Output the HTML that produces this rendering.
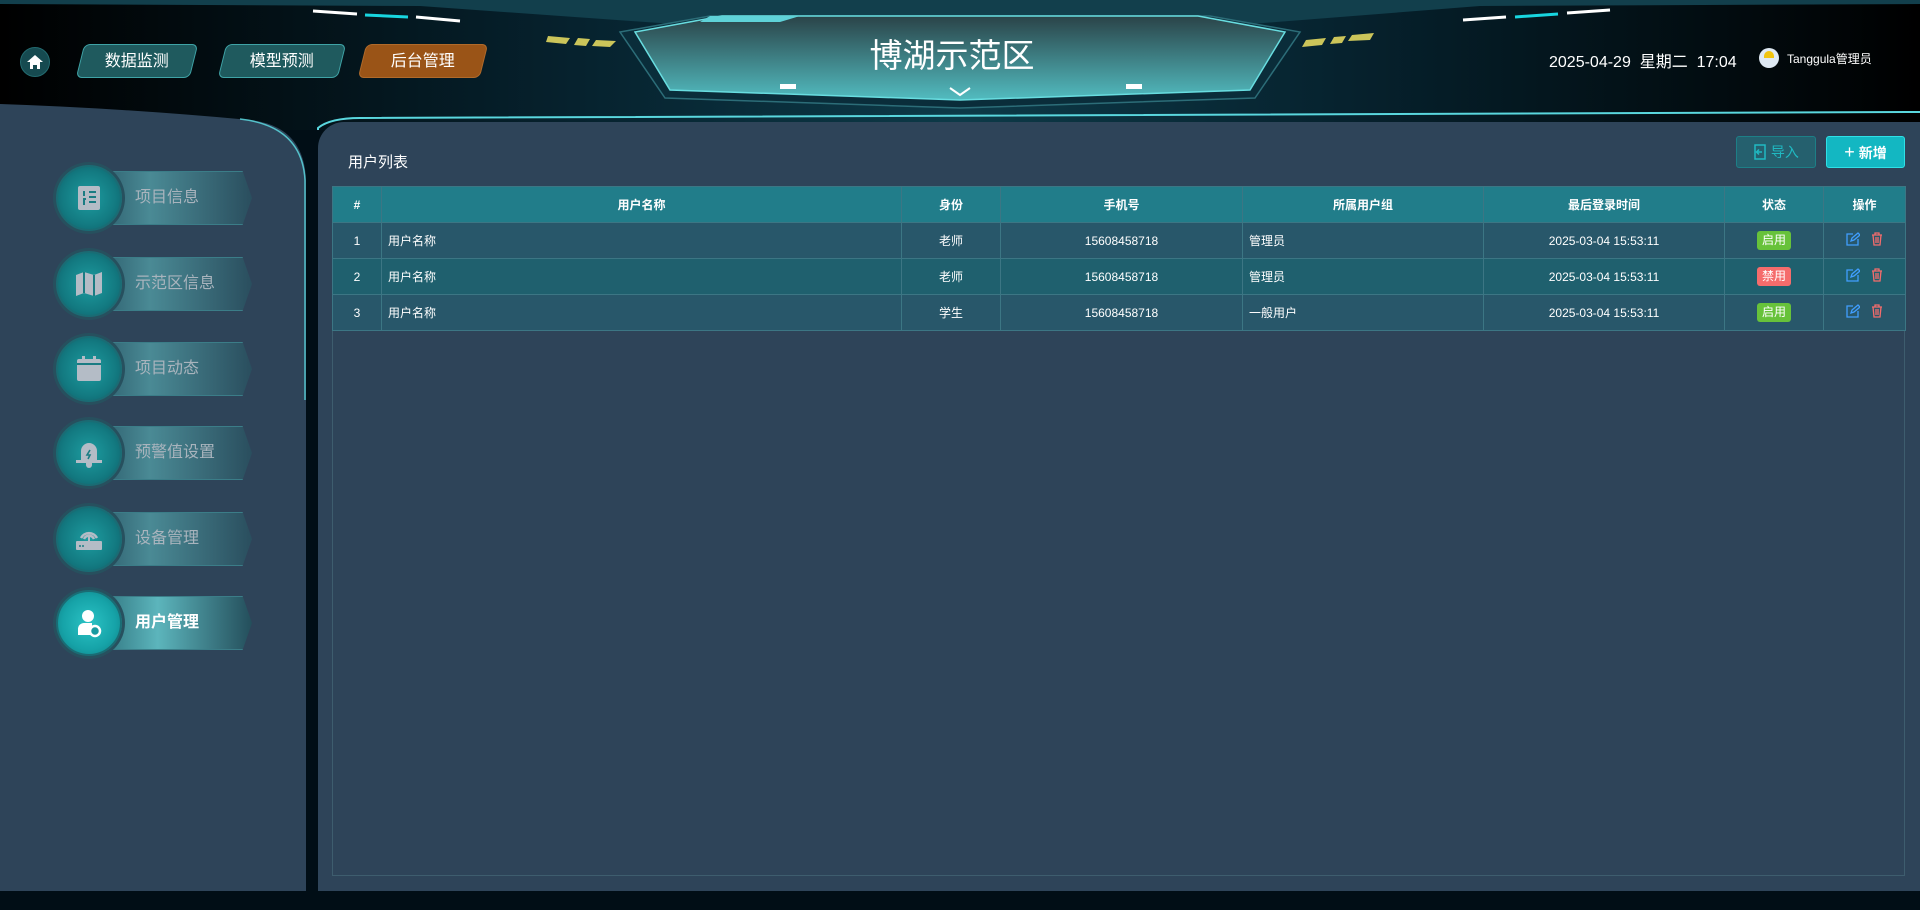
<!DOCTYPE html>
<html><head><meta charset="utf-8">
<style>
*{margin:0;padding:0;box-sizing:border-box}
body{width:1920px;height:910px;overflow:hidden;background:#010e16;font-family:"Liberation Sans","Noto Sans CJK SC",sans-serif;color:#fff;position:relative}
.abs{position:absolute}
.tab{position:absolute;top:44px;height:34px;line-height:34px;text-align:center;font-size:16px;color:#fff;transform:skewX(-14deg);border-radius:6px;border:1px solid #3fa3a6}
.tab span{display:inline-block;transform:skewX(14deg)}
.menu{position:absolute;left:0;width:300px;height:70px}
.menu .bar{position:absolute;left:95px;top:8px;width:157px;height:54px;background:linear-gradient(90deg,#2b5b6a 0%,#4a8a95 35%,#2a4e5e 100%);border-top:1px solid #3b7d88;border-bottom:1px solid #3b7d88;clip-path:polygon(0 0,94% 0,100% 50%,94% 100%,0 100%)}
.menu .circ{position:absolute;left:56px;top:2px;width:66px;height:66px;border-radius:50%;background:radial-gradient(circle,#1d9ca0 0%,#137b82 60%,#0f5c66 100%);border:2px solid #1a6c74;box-shadow:0 0 0 3px #27505e}
.menu .txt{position:absolute;left:135px;top:0;line-height:70px;font-size:16px;color:#a9b4bd}
.menu.act .txt{color:#fff;font-weight:bold}
.menu.act .bar{background:linear-gradient(90deg,#2b6d78 0%,#5cb5bc 40%,#244e5b 100%)}
.menu.act .circ{background:radial-gradient(circle,#2bc3c5 0%,#16a3a8 60%,#0f7a80 100%)}
.menu svg.ic{position:absolute;left:73px;top:19px}
table{border-collapse:collapse;font-size:12px;table-layout:fixed}
td,th{border:1px solid #3c7684;height:36px;text-align:center;color:#fff}
th{background:#217d8a;font-weight:bold}
tr.r1 td{background:#28576a}
tr.r2 td{background:#1f606e}
td.l{text-align:left;padding-left:6px}
.badge{display:inline-block;padding:0 5px;height:19px;line-height:19px;border-radius:3px;font-size:12px;color:#fff}
</style></head><body>
<svg class="abs" style="left:0;top:0" width="1920" height="130">
<defs>
<linearGradient id="hg" x1="0" x2="1"><stop offset="0" stop-color="#000"/><stop offset="0.3" stop-color="#06222e"/><stop offset="0.5" stop-color="#0d3a48"/><stop offset="0.7" stop-color="#06222e"/><stop offset="1" stop-color="#000"/></linearGradient>
<linearGradient id="tg" x1="0" y1="0" x2="0" y2="1"><stop offset="0" stop-color="#2a4348"/><stop offset="1" stop-color="#52bcc0"/></linearGradient>
</defs>
<rect width="1920" height="130" fill="url(#hg)"/>
<polygon points="0,0 1920,0 1920,4 1480,6 1200,28 730,28 420,6 0,4" fill="#123f4c"/>
<polygon points="620,32 710,16 1210,16 1300,32 1255,98 960,108 665,98" fill="#0a2d3a" stroke="#2c6d78" stroke-width="1.5"/>
<polygon points="635,32 722,16 1198,16 1285,32 1250,90 960,100 670,90" fill="url(#tg)" stroke="#68dde0" stroke-width="1.5"/>
<polygon points="710,16 800,16 780,22 700,22" fill="#5fd2d8"/>
<rect x="780" y="84" width="16" height="5" fill="#fff"/><rect x="1126" y="84" width="16" height="5" fill="#fff"/>
<polyline points="950,88 960,95 970,88" fill="none" stroke="#fff" stroke-width="2"/>
<line x1="313" y1="11" x2="357" y2="14" stroke="#fff" stroke-width="3"/><line x1="365" y1="15" x2="408" y2="17" stroke="#18d6e0" stroke-width="3"/><line x1="416" y1="17" x2="460" y2="21" stroke="#fff" stroke-width="3"/>
<line x1="1463" y1="20" x2="1506" y2="17" stroke="#fff" stroke-width="3"/><line x1="1515" y1="17" x2="1558" y2="14" stroke="#18d6e0" stroke-width="3"/><line x1="1567" y1="13" x2="1610" y2="10" stroke="#fff" stroke-width="3"/>
<polygon points="548,36 570,38 566,44 546,42" fill="#cbc55a"/><polygon points="578,38 590,39 586,46 574,45" fill="#cbc55a"/><polygon points="596,40 616,41 610,47 592,46" fill="#cbc55a"/>
<polygon points="1306,40 1326,38 1322,45 1302,47" fill="#cbc55a"/><polygon points="1334,37 1346,36 1342,43 1330,44" fill="#cbc55a"/><polygon points="1352,35 1374,33 1370,40 1348,41" fill="#cbc55a"/>
<path d="M318,130 L318,128 Q330,118 360,118 L1920,112" stroke="#5ad7de" stroke-width="2" fill="none"/>
</svg>
<div class="abs" style="left:20px;top:47px;width:30px;height:30px;border-radius:50%;background:#164a50;border:1px solid #236b70"></div>
<svg class="abs" style="left:26px;top:53px" width="18" height="18" viewBox="0 0 18 18"><path d="M9 2 L17 9 H14 V16 H11 V12 H7 V16 H4 V9 H1 Z" fill="#fff"/></svg>
<div class="tab" style="left:80px;width:114px;background:#1f5a5e"><span>数据监测</span></div>
<div class="tab" style="left:222px;width:120px;background:#1f5a5e"><span>模型预测</span></div>
<div class="tab" style="left:362px;width:122px;background:#9a5417;border-color:#b06a2a"><span>后台管理</span></div>
<div class="abs" style="left:0;top:29px;width:1904px;text-align:center;font-size:33px;color:#fff">博湖示范区</div>
<div class="abs" style="left:1549px;top:48px;font-size:16px;white-space:pre">2025-04-29  星期二  17:04</div>
<div class="abs" style="left:1759px;top:48px;width:20px;height:20px;border-radius:50%;background:#dfe9f3"><div style="margin:3px auto 0;width:10px;height:7px;border-radius:5px 5px 0 0;background:#f1c40f"></div></div>
<div class="abs" style="left:1787px;top:50px;font-size:12px">Tanggula管理员</div>
<!-- sidebar -->
<svg class="abs" style="left:0;top:100px" width="320" height="800">
<path d="M0,4 Q120,8 250,20 Q304,26 306,80 L306,791 L0,791 Z" fill="#2e4459"/>
<path d="M240,19 Q302,26 305,80 L305,300" stroke="#5ad7de" stroke-width="1.5" fill="none" opacity="0.85"/>
</svg>
<div class="abs" style="left:318px;top:122px;width:1602px;height:769px;background:#2e4459;border-top-left-radius:26px"></div>

<div class="menu" style="top:163px"><div class="bar"></div><div class="circ"></div>
<svg class="ic" width="32" height="32" viewBox="0 0 32 32"><rect x="5" y="4" width="22" height="24" rx="2" fill="#b4bcc6"/><path d="M11 9v5M10 17h3M11 18v5M16 10h7M16 15h7M16 20h7" stroke="#1a7c83" stroke-width="2"/></svg>
<div class="txt">项目信息</div></div>
<div class="menu" style="top:249px"><div class="bar"></div><div class="circ"></div>
<svg class="ic" width="32" height="32" viewBox="0 0 32 32"><path d="M3 7 L11 4 L21 7 L29 4 V25 L21 28 L11 25 L3 28 Z" fill="#b4bcc6"/><path d="M11 4 V25 M21 7 V28" stroke="#1a7c83" stroke-width="2"/></svg>
<div class="txt">示范区信息</div></div>
<div class="menu" style="top:334px"><div class="bar"></div><div class="circ"></div>
<svg class="ic" width="32" height="32" viewBox="0 0 32 32"><rect x="4" y="6" width="24" height="22" rx="2" fill="#b4bcc6"/><rect x="9" y="3" width="3" height="6" fill="#b4bcc6"/><rect x="20" y="3" width="3" height="6" fill="#b4bcc6"/><path d="M4 11 H28" stroke="#1a7c83" stroke-width="2"/></svg>
<div class="txt">项目动态</div></div>
<div class="menu" style="top:418px"><div class="bar"></div><div class="circ"></div>
<svg class="ic" width="32" height="32" viewBox="0 0 32 32"><path d="M8 23 V14 A8 8 0 0 1 24 14 V23 Z" fill="#b4bcc6"/><rect x="3" y="23" width="26" height="3" fill="#b4bcc6"/><path d="M13 26 h6 v2 a3 3 0 0 1 -6 0z" fill="#b4bcc6"/><path d="M17 13 l-3 5 h3 l-2 4" stroke="#1a7c83" stroke-width="1.6" fill="none"/></svg>
<div class="txt">预警值设置</div></div>
<div class="menu" style="top:504px"><div class="bar"></div><div class="circ"></div>
<svg class="ic" width="32" height="32" viewBox="0 0 32 32"><rect x="3" y="18" width="26" height="9" rx="1" fill="#b4bcc6"/><path d="M8 15 A9 9 0 0 1 24 15 M11 16 A5.5 5.5 0 0 1 21 16" stroke="#b4bcc6" stroke-width="2.5" fill="none"/><rect x="15" y="12" width="2" height="6" fill="#b4bcc6"/><circle cx="7" cy="23" r="1" fill="#1a7c83"/><circle cx="10" cy="23" r="1" fill="#1a7c83"/></svg>
<div class="txt">设备管理</div></div>
<div class="menu act" style="top:588px"><div class="bar"></div><div class="circ"></div>
<svg class="ic" width="32" height="32" viewBox="0 0 32 32"><circle cx="15" cy="9" r="6" fill="#fff"/><path d="M5 28 V22 A6 6 0 0 1 11 16 H19 V28 Z" fill="#fff"/><circle cx="22" cy="24" r="5" fill="#1a9aa0" stroke="#fff" stroke-width="2.5"/></svg>
<div class="txt">用户管理</div></div>

<div class="abs" style="left:348px;top:151px;font-size:15px">用户列表</div>
<div class="abs" style="left:1736px;top:136px;width:80px;height:32px;border:1px solid #1d7f87;background:#25606e;border-radius:3px;color:#20b9c2;font-size:14px;line-height:30px;text-align:center">
<svg width="14" height="16" viewBox="0 0 14 16" style="vertical-align:-3px"><path d="M2 1h10v14H2zM9 8H4M6 5.5L3.5 8 6 10.5" stroke="#20b9c2" stroke-width="1.5" fill="none"/></svg> 导入</div>
<div class="abs" style="left:1826px;top:136px;width:79px;height:32px;background:#13b7c2;border:1px solid #2fe0e6;border-radius:3px;font-size:14px;line-height:30px;text-align:center;font-weight:bold"><span style="font-weight:normal;font-size:18px">+</span> 新增</div>

<div class="abs" style="left:332px;top:186px;width:1573px;height:690px;border:1px solid #3e5d6e"></div>
<table class="abs" style="left:332px;top:186px;width:1573px">
<colgroup><col style="width:49px"><col style="width:520px"><col style="width:99px"><col style="width:242px"><col style="width:241px"><col style="width:241px"><col style="width:99px"><col style="width:82px"></colgroup>
<tr><th>#</th><th>用户名称</th><th>身份</th><th>手机号</th><th>所属用户组</th><th>最后登录时间</th><th>状态</th><th>操作</th></tr>
<tr class="r1"><td>1</td><td class="l">用户名称</td><td>老师</td><td>15608458718</td><td class="l">管理员</td><td>2025-03-04 15:53:11</td><td><span class="badge" style="background:#67c23a">启用</span></td><td><svg width="14" height="14" viewBox="0 0 14 14"><path d="M7 2H1v11h11V7M5 9l1-3 6-5 2 2-6 5z" stroke="#409eff" stroke-width="1.3" fill="none"/></svg>&nbsp;&nbsp;&nbsp;<svg width="12" height="14" viewBox="0 0 12 14"><path d="M1 3h10M4 3V1h4v2M2 3l1 10h6l1-10M5 5v6M7 5v6" stroke="#f56c6c" stroke-width="1.3" fill="none"/></svg></td></tr>
<tr class="r2"><td>2</td><td class="l">用户名称</td><td>老师</td><td>15608458718</td><td class="l">管理员</td><td>2025-03-04 15:53:11</td><td><span class="badge" style="background:#f56c6c">禁用</span></td><td><svg width="14" height="14" viewBox="0 0 14 14"><path d="M7 2H1v11h11V7M5 9l1-3 6-5 2 2-6 5z" stroke="#409eff" stroke-width="1.3" fill="none"/></svg>&nbsp;&nbsp;&nbsp;<svg width="12" height="14" viewBox="0 0 12 14"><path d="M1 3h10M4 3V1h4v2M2 3l1 10h6l1-10M5 5v6M7 5v6" stroke="#f56c6c" stroke-width="1.3" fill="none"/></svg></td></tr>
<tr class="r1"><td>3</td><td class="l">用户名称</td><td>学生</td><td>15608458718</td><td class="l">一般用户</td><td>2025-03-04 15:53:11</td><td><span class="badge" style="background:#67c23a">启用</span></td><td><svg width="14" height="14" viewBox="0 0 14 14"><path d="M7 2H1v11h11V7M5 9l1-3 6-5 2 2-6 5z" stroke="#409eff" stroke-width="1.3" fill="none"/></svg>&nbsp;&nbsp;&nbsp;<svg width="12" height="14" viewBox="0 0 12 14"><path d="M1 3h10M4 3V1h4v2M2 3l1 10h6l1-10M5 5v6M7 5v6" stroke="#f56c6c" stroke-width="1.3" fill="none"/></svg></td></tr>
</table>
</body></html>
